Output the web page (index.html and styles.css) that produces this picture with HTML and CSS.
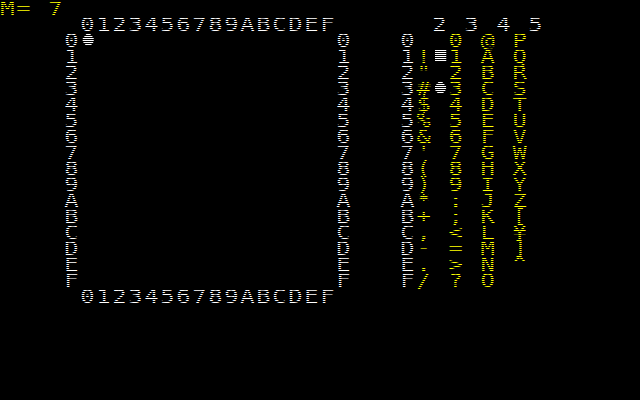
FILE: index.html
```html
<!DOCTYPE html>
<html>
<head>
<meta charset="utf-8">
<link rel="stylesheet" href="styles.css">
</head>
<body>
<div class="screen">
<div class="text">
<div class="row"><span class="y">M= 7</span></div>
<div class="row">     0123456789ABCDEF      2 3 4 5</div>
<div class="row">    0<span class="dia"></span>               0   0<span class="y"> </span> <span class="y">0 @ P</span></div>
<div class="row">    1                1   1<span class="y">!</span><span class="blk"></span><span class="y">1 A Q</span></div>
<div class="row">    2                2   2<span class="y">"</span> <span class="y">2 B R</span></div>
<div class="row">    3                3   3<span class="y">#</span><span class="dia"></span><span class="y">3 C S</span></div>
<div class="row">    4                4   4<span class="y">$</span> <span class="y">4 D T</span></div>
<div class="row">    5                5   5<span class="y">%</span> <span class="y">5 E U</span></div>
<div class="row">    6                6   6<span class="y">&amp;</span> <span class="y">6 F V</span></div>
<div class="row">    7                7   7<span class="y">'</span> <span class="y">7 G W</span></div>
<div class="row">    8                8   8<span class="y">(</span> <span class="y">8 H X</span></div>
<div class="row">    9                9   9<span class="y">)</span> <span class="y">9 I Y</span></div>
<div class="row">    A                A   A<span class="y">*</span> <span class="y">: J Z</span></div>
<div class="row">    B                B   B<span class="y">+</span> <span class="y">; K [</span></div>
<div class="row">    C                C   C<span class="y">,</span> <span class="y">&lt; L ¥</span></div>
<div class="row">    D                D   D<span class="y">-</span> <span class="y">= M ]</span></div>
<div class="row">    E                E   E<span class="y">.</span> <span class="y">&gt; N ^</span></div>
<div class="row">    F                F   F<span class="y">/</span> <span class="y">? O <span class="us">_</span></span></div>
<div class="row">     0123456789ABCDEF</div>
</div>
<div class="scan"></div>
</div>
</body>
</html>
```

FILE: styles.css
```css
html, body {
  margin: 0;
  padding: 0;
  background: #000;
}

.screen {
  position: relative;
  width: 640px;
  height: 400px;
  overflow: hidden;
  background: #000;
}

.text {
  width: 512px;
  padding-left: 0.3px;
  transform: scaleX(1.25);
  transform-origin: 0 0;
  font-family: "DejaVu Sans Mono", monospace;
  font-size: 19px;
  line-height: 16px;
  letter-spacing: 1.361px;
  color: #fff;
}

.row {
  height: 16px;
  white-space: pre;
}

.y {
  color: #ff0;
}

.us {
  line-height: 0;
  vertical-align: 6px;
}

.dia,
.blk {
  display: inline-block;
  width: 12.8px;
  height: 16px;
  vertical-align: top;
}

.dia::before,
.blk::before {
  content: "";
  display: block;
  margin: 2px 0 0 1.6px;
  width: 9.6px;
  height: 12px;
  background: #fff;
}

.dia::before {
  clip-path: polygon(34% 0, 66% 0, 100% 40%, 100% 60%, 66% 100%, 34% 100%, 0 60%, 0 40%);
}

.scan {
  position: absolute;
  inset: 0;
  background: repeating-linear-gradient(to bottom, transparent 0, transparent 1px, #000 1px, #000 2px);
  pointer-events: none;
}
```
